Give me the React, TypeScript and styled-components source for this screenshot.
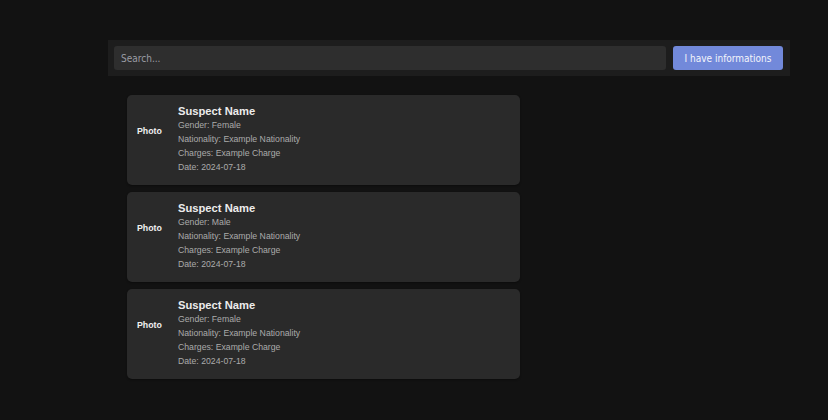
import React from "react";
import styled, { createGlobalStyle } from "styled-components";

const GlobalStyle = createGlobalStyle`
  html, body {
    margin: 0;
    padding: 0;
    background: #121212;
  }
  body {
    font-family: "Liberation Sans", Arial, sans-serif;
    min-height: 420px;
  }
`;

const Page = styled.div`
  padding: 40px 38px 0 108px;
`;

const Toolbar = styled.div`
  display: flex;
  align-items: center;
  gap: 7px;
  height: 36px;
  box-sizing: border-box;
  padding: 6px 7px 6px 6px;
  background: #1d1d1d;
`;

const SearchInput = styled.input`
  flex: 1;
  height: 24px;
  box-sizing: border-box;
  border: none;
  outline: none;
  border-radius: 3px;
  background: #2e2e2e;
  color: #ddd;
  padding: 0 7px;
  font-family: "DejaVu Sans", "Liberation Sans", sans-serif;
  font-stretch: condensed;
  font-size: 10px;
  &::placeholder {
    color: #9a9ca4;
  }
`;

const ActionButton = styled.button`
  width: 110px;
  height: 24px;
  border: none;
  border-radius: 3px;
  background: #7289da;
  color: #f4f5fb;
  font-family: "DejaVu Sans", "Liberation Sans", sans-serif;
  font-stretch: condensed;
  font-size: 10px;
  padding: 0;
  cursor: pointer;
`;

const List = styled.div`
  display: flex;
  flex-direction: column;
  gap: 7px;
  width: 393px;
  margin: 19px 0 0 19px;
`;

const Card = styled.div`
  display: flex;
  align-items: flex-start;
  gap: 10px;
  padding: 9px 10px 10px;
  border-radius: 5px;
  background: #2a2a2a;
  box-shadow: 0 1px 2px rgba(0, 0, 0, 0.35);
`;

const Photo = styled.div`
  width: 31px;
  height: 54px;
  display: flex;
  align-items: center;
  color: #f0f0f0;
  font-weight: bold;
  font-size: 8.8px;
`;

const Info = styled.div`
  display: flex;
  flex-direction: column;
`;

const Name = styled.div`
  color: #ececec;
  font-weight: bold;
  font-size: 11.2px;
  line-height: 14px;
  margin-bottom: 1.4px;
`;

const Detail = styled.div`
  color: #ababab;
  font-size: 8.7px;
  line-height: 13.9px;
`;

const suspects = [
  { gender: "Female" },
  { gender: "Male" },
  { gender: "Female" },
];

export default function App() {
  return (
    <>
      <GlobalStyle />
      <Page>
        <Toolbar>
          <SearchInput placeholder="Search..." />
          <ActionButton>I have informations</ActionButton>
        </Toolbar>
        <List>
          {suspects.map((s, i) => (
            <Card key={i}>
              <Photo>Photo</Photo>
              <Info>
                <Name>Suspect Name</Name>
                <Detail>Gender: {s.gender}</Detail>
                <Detail>Nationality: Example Nationality</Detail>
                <Detail>Charges: Example Charge</Detail>
                <Detail>Date: 2024-07-18</Detail>
              </Info>
            </Card>
          ))}
        </List>
      </Page>
    </>
  );
}
